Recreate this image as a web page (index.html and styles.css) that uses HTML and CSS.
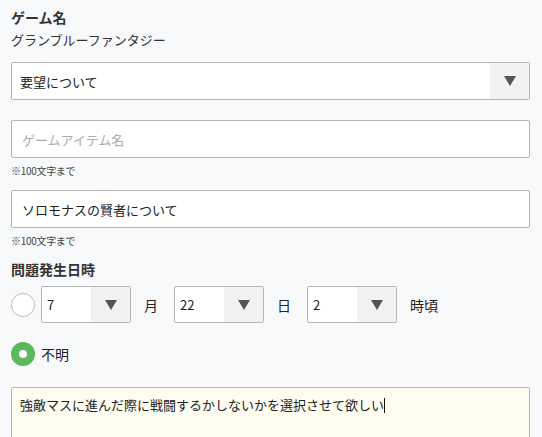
FILE: index.html
```html
<!DOCTYPE html>
<html lang="ja">
<head>
<meta charset="UTF-8" />
<meta name="viewport" content="width=device-width, initial-scale=1.0" />
<title>お問い合わせ</title>
<link rel="stylesheet" href="styles.css">
</head>
<body>
<form class="inquiry">
  <!-- ゲーム -->
  <div class="label">ゲーム名</div>
  <div class="gameName">グランブルーファンタジー</div>

  <div class="selectBox wide">
    <span class="selectValue">要望について</span>
    <span class="selectArrow"><i class="tri"></i></span>
  </div>

  <input class="textInput first" type="text" placeholder="ゲームアイテム名">
  <div class="note">※100文字まで</div>

  <input class="textInput" type="text" value="ソロモナスの賢者について">
  <div class="note">※100文字まで</div>

  <!-- 日時 -->
  <div class="label dateLabel">問題発生日時</div>
  <div class="dateRow">
    <span class="radio"></span>
    <div class="selectBox small">
      <span class="selectValue">7</span>
      <span class="selectArrow"><i class="tri"></i></span>
    </div>
    <span class="unit">月</span>
    <div class="selectBox small">
      <span class="selectValue">22</span>
      <span class="selectArrow"><i class="tri"></i></span>
    </div>
    <span class="unit">日</span>
    <div class="selectBox small">
      <span class="selectValue">2</span>
      <span class="selectArrow"><i class="tri"></i></span>
    </div>
    <span class="unit">時頃</span>
  </div>
  <div class="unknownRow">
    <span class="radio checked"></span>
    <span>不明</span>
  </div>

  <div class="body">強敵マスに進んだ際に戦闘するかしないかを選択させて欲しい<span class="caret"></span></div>
</form>
</body>
</html>
```

FILE: styles.css
```css
  body {
    font-family: "Noto Sans CJK JP", "Noto Sans", sans-serif;
    background-color: #f8f9fb;
    color: #222;
    margin: 0;
    padding: 7px 12px 0 11px;
  }
  .inquiry {
    display: flex;
    flex-direction: column;
  }
  .label {
    font-size: 14px;
    font-weight: bold;
    line-height: 20px;
    color: #333;
  }
  .gameName {
    font-size: 13px;
    line-height: 20px;
    margin-top: 3px;
    color: #333;
  }

  /* セレクト */
  .selectBox {
    display: flex;
    box-sizing: border-box;
    background: #fff;
    border: 1px solid #b5b5b5;
    border-radius: 2px;
    font-size: 13px;
    color: #222;
  }
  .selectBox.wide { height: 38px; margin-top: 12px; }
  .selectBox.small { width: 90px; height: 37px; }
  .selectValue {
    flex: 1;
    display: flex;
    align-items: center;
    padding-left: 8px;
  }
  .small .selectValue { padding-left: 5px; }
  .selectArrow {
    width: 39px;
    background: #f2f2f2;
    display: flex;
    align-items: center;
    justify-content: center;
  }
  .tri {
    width: 0;
    height: 0;
    border-left: 6px solid transparent;
    border-right: 6px solid transparent;
    border-top: 10px solid #555;
  }

  /* テキスト入力 */
  .textInput {
    box-sizing: border-box;
    height: 38px;
    margin: 12px 0 0;
    padding: 0 10px;
    border: 1px solid #b5b5b5;
    border-radius: 2px;
    font-family: inherit;
    font-size: 13px;
    color: #222;
    background: #fff;
  }
  .textInput.first { margin-top: 20px; }
  .textInput::placeholder { color: #aaa; }
  .note {
    font-size: 10px;
    line-height: 14px;
    margin-top: 6px;
    color: #444;
    letter-spacing: -0.3px;
  }

  /* 日時 */
  .dateLabel { margin-top: 11px; }
  .dateRow {
    display: flex;
    align-items: center;
    margin-top: 7px;
  }
  .unit {
    font-size: 14px;
    margin: 0 16px 0 13px;
  }
  .radio {
    box-sizing: border-box;
    width: 24px;
    height: 24px;
    border-radius: 50%;
    border: 1px solid #bbb;
    background: #fff;
    margin-right: 6px;
  }
  .radio.checked {
    border: 8px solid #5cb85c;
  }
  .unknownRow {
    display: flex;
    align-items: center;
    font-size: 14px;
    margin-top: 19px;
  }

  /* 本文 */
  .body {
    margin-top: 21px;
    height: 60px;
    box-sizing: border-box;
    padding: 8px 8px;
    border: 1px solid #b5b5b5;
    border-radius: 2px;
    background: #fffdf0;
    font-size: 13px;
    line-height: 18px;
    color: #222;
  }
  .caret {
    display: inline-block;
    width: 1px;
    height: 15px;
    background: #111;
    vertical-align: -3px;
  }
```
